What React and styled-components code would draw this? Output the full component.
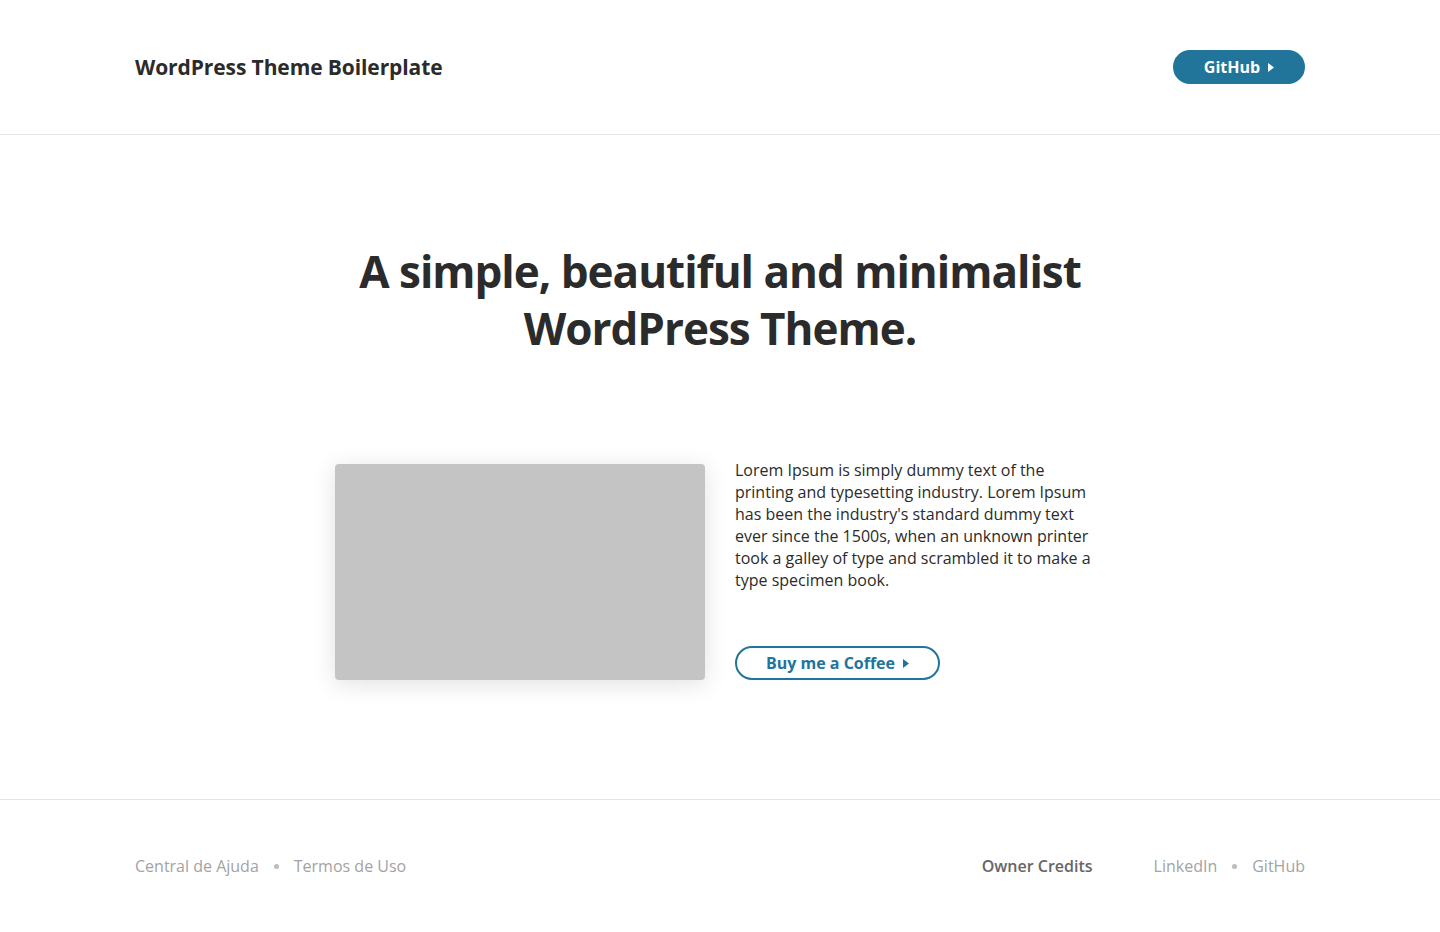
import React from "react";
import styled, { createGlobalStyle } from "styled-components";

const GlobalStyle = createGlobalStyle`
  * { box-sizing: border-box; }
  body {
    margin: 0;
    background: #fff;
    font-family: "Open Sans", "Noto Sans", sans-serif;
    color: #2b2b2b;
  }
`;

const Container = styled.div`
  width: 1170px;
  margin: 0 auto;
`;

const Header = styled.header`
  border-bottom: 1px solid #e4e4e4;
`;

const HeaderInner = styled(Container)`
  height: 134px;
  display: flex;
  align-items: center;
  justify-content: space-between;
`;

const Logo = styled.a`
  font-size: 21px;
  font-weight: 700;
  letter-spacing: -0.1px;
  color: #2b2b2b;
  text-decoration: none;
`;

const Caret = () => (
  <svg width="6" height="9" viewBox="0 0 6 9">
    <path d="M0 0 L6 4.5 L0 9 Z" fill="currentColor" />
  </svg>
);

const Button = styled.a`
  display: inline-flex;
  align-items: center;
  justify-content: center;
  gap: 8px;
  height: 34px;
  width: ${(p) => p.$width}px;
  border-radius: 17px;
  font-size: 16px;
  font-weight: 700;
  text-decoration: none;
  border: 2px solid #21759b;
  background: ${(p) => (p.$outline ? "#fff" : "#21759b")};
  color: ${(p) => (p.$outline ? "#21759b" : "#fff")};
`;

const Main = styled.main`
  padding: 108px 0 119px;
  border-bottom: 1px solid #e4e4e4;
`;

const Title = styled.h1`
  margin: 0;
  text-align: center;
  font-size: 44px;
  line-height: 57px;
  font-weight: 700;
  letter-spacing: -1px;
  color: #2b2b2b;
`;

const Feature = styled.section`
  display: flex;
  justify-content: center;
  align-items: flex-end;
  gap: 30px;
  margin-top: 102px;
`;

const Thumb = styled.div`
  width: 370px;
  height: 216px;
  background: #c4c4c4;
  border-radius: 4px;
  box-shadow: 0 4px 24px rgba(0, 0, 0, 0.12);
`;

const Copy = styled.div`
  width: 370px;
`;

const Text = styled.p`
  margin: 0 0 55px;
  font-size: 16px;
  line-height: 22px;
  color: #2b2b2b;
`;

const Footer = styled.footer`
  padding: 55px 0 55px;
`;

const FooterInner = styled(Container)`
  display: flex;
  justify-content: space-between;
  align-items: center;
`;

const LinkGroup = styled.nav`
  display: flex;
  align-items: center;
  gap: ${(p) => p.$gap || 0}px;
`;

const FootLink = styled.a`
  font-size: 16px;
  line-height: 22px;
  color: ${(p) => (p.$strong ? "#666" : "#a3a3a3")};
  font-weight: ${(p) => (p.$strong ? 600 : 400)};
  text-decoration: none;
`;

const Dot = styled.span`
  width: 5px;
  height: 5px;
  border-radius: 50%;
  background: #bdbdbd;
  margin: 0 15px;
`;

const App = () => {
  return (
    <>
      <GlobalStyle />
      <Header>
        <HeaderInner>
          <Logo href="#">WordPress Theme Boilerplate</Logo>
          <Button href="#" $width={132}>
            GitHub <Caret />
          </Button>
        </HeaderInner>
      </Header>
      <Main>
        <Title>
          A simple, beautiful and minimalist
          <br />
          WordPress Theme.
        </Title>
        <Feature>
          <Thumb />
          <Copy>
            <Text>
              Lorem Ipsum is simply dummy text of the printing and typesetting
              industry. Lorem Ipsum has been the industry's standard dummy text
              ever since the 1500s, when an unknown printer took a galley of
              type and scrambled it to make a type specimen book.
            </Text>
            <Button href="#" $outline $width={205}>
              Buy me a Coffee <Caret />
            </Button>
          </Copy>
        </Feature>
      </Main>
      <Footer>
        <FooterInner>
          <LinkGroup>
            <FootLink href="#">Central de Ajuda</FootLink>
            <Dot />
            <FootLink href="#">Termos de Uso</FootLink>
          </LinkGroup>
          <LinkGroup $gap={61}>
            <FootLink href="#" $strong>Owner Credits</FootLink>
            <LinkGroup>
              <FootLink href="#">LinkedIn</FootLink>
              <Dot />
              <FootLink href="#">GitHub</FootLink>
            </LinkGroup>
          </LinkGroup>
        </FooterInner>
      </Footer>
    </>
  );
};

export default App;
